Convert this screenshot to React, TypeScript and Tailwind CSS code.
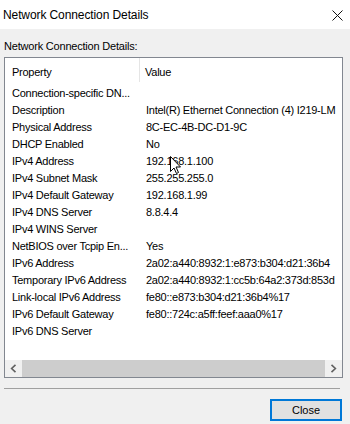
import React from "react";

const rows: [string, string][] = [
  ["Connection-specific DN...", ""],
  ["Description", "Intel(R) Ethernet Connection (4) I219-LM"],
  ["Physical Address", "8C-EC-4B-DC-D1-9C"],
  ["DHCP Enabled", "No"],
  ["IPv4 Address", "192.168.1.100"],
  ["IPv4 Subnet Mask", "255.255.255.0"],
  ["IPv4 Default Gateway", "192.168.1.99"],
  ["IPv4 DNS Server", "8.8.4.4"],
  ["IPv4 WINS Server", ""],
  ["NetBIOS over Tcpip En...", "Yes"],
  ["IPv6 Address", "2a02:a440:8932:1:e873:b304:d21:36b4"],
  ["Temporary IPv6 Address", "2a02:a440:8932:1:cc5b:64a2:373d:853d"],
  ["Link-local IPv6 Address", "fe80::e873:b304:d21:36b4%17"],
  ["IPv6 Default Gateway", "fe80::724c:a5ff:feef:aaa0%17"],
  ["IPv6 DNS Server", ""],
];

export default function App() {
  return (
    <div
      className="relative w-[350px] h-[424px] bg-[#f0f0f0] overflow-hidden text-black"
      style={{ fontFamily: '"Liberation Sans", Arial, sans-serif' }}
    >
      {/* Title bar */}
      <div className="h-[29px] bg-white flex items-center justify-between pl-[3px] pr-[7px]">
        <span className="text-[12px] tracking-[-0.1px]">Network Connection Details</span>
        <svg width="11" height="11" viewBox="0 0 11 11" className="mt-[1px]">
          <path d="M0.5 0.5 L10.5 10.5 M10.5 0.5 L0.5 10.5" stroke="#111" strokeWidth="1" />
        </svg>
      </div>

      {/* Label */}
      <div className="pl-[4px] pt-[11px] h-[28px] text-[11px] leading-[13px] tracking-[-0.2px]">
        Network Connection Details:
      </div>

      {/* List box */}
      <div className="ml-[4px] w-[339px] h-[321px] border border-[#828790] bg-white flex flex-col">
        {/* header */}
        <div className="h-[27px] flex text-[11px] tracking-[-0.25px] shrink-0">
          <div className="w-[135px] h-[24px] pl-[7px] pt-[6px] border-r border-[#e5e5e5]">Property</div>
          <div className="pl-[5px] pt-[6px]">Value</div>
        </div>
        <div className="flex-1 flex flex-col text-[11px] tracking-[-0.25px]">
          {rows.map(([k, v]) => (
            <div key={k} className="h-[17px] flex items-center whitespace-nowrap">
              <div className="w-[136px] pl-[7px] shrink-0 overflow-hidden">{k}</div>
              <div className="pl-[5px] overflow-hidden flex-1">{v}</div>
            </div>
          ))}
        </div>
        {/* horizontal scrollbar */}
        <div className="h-[17px] flex bg-[#f0f0f0] shrink-0">
          <div className="w-[17px] flex items-center justify-center">
            <svg width="7" height="9" viewBox="0 0 7 9">
              <path d="M5.5 0.8 L1.6 4.5 L5.5 8.2" stroke="#606060" strokeWidth="1.6" fill="none" />
            </svg>
          </div>
          <div className="flex-1 bg-[#cdcdcd]" />
          <div className="w-[17px] flex items-center justify-center">
            <svg width="7" height="9" viewBox="0 0 7 9">
              <path d="M1.5 0.8 L5.4 4.5 L1.5 8.2" stroke="#606060" strokeWidth="1.6" fill="none" />
            </svg>
          </div>
        </div>
      </div>

      {/* separator */}
      <div className="ml-[4px] mt-[10px] w-[336px] h-[1px] bg-[#a0a0a0]" />

      {/* button row */}
      <div className="flex justify-end pr-[8px] mt-[10px]">
        <button className="w-[72px] h-[22px] border-2 border-[#0078d7] bg-[#e1e1e1] text-[11px] leading-none flex items-center justify-center">
          Close
        </button>
      </div>

      {/* mouse cursor */}
      <svg
        className="absolute left-[170px] top-[156px]"
        width="12"
        height="19"
        viewBox="0 0 12 19"
      >
        <path
          d="M0.5 0.5 L0.5 15.5 L4 12 L6.5 17.5 L8.5 16.5 L6 11 L10.5 11 Z"
          fill="white"
          stroke="black"
          strokeWidth="1"
          strokeLinejoin="miter"
        />
      </svg>
    </div>
  );
}
